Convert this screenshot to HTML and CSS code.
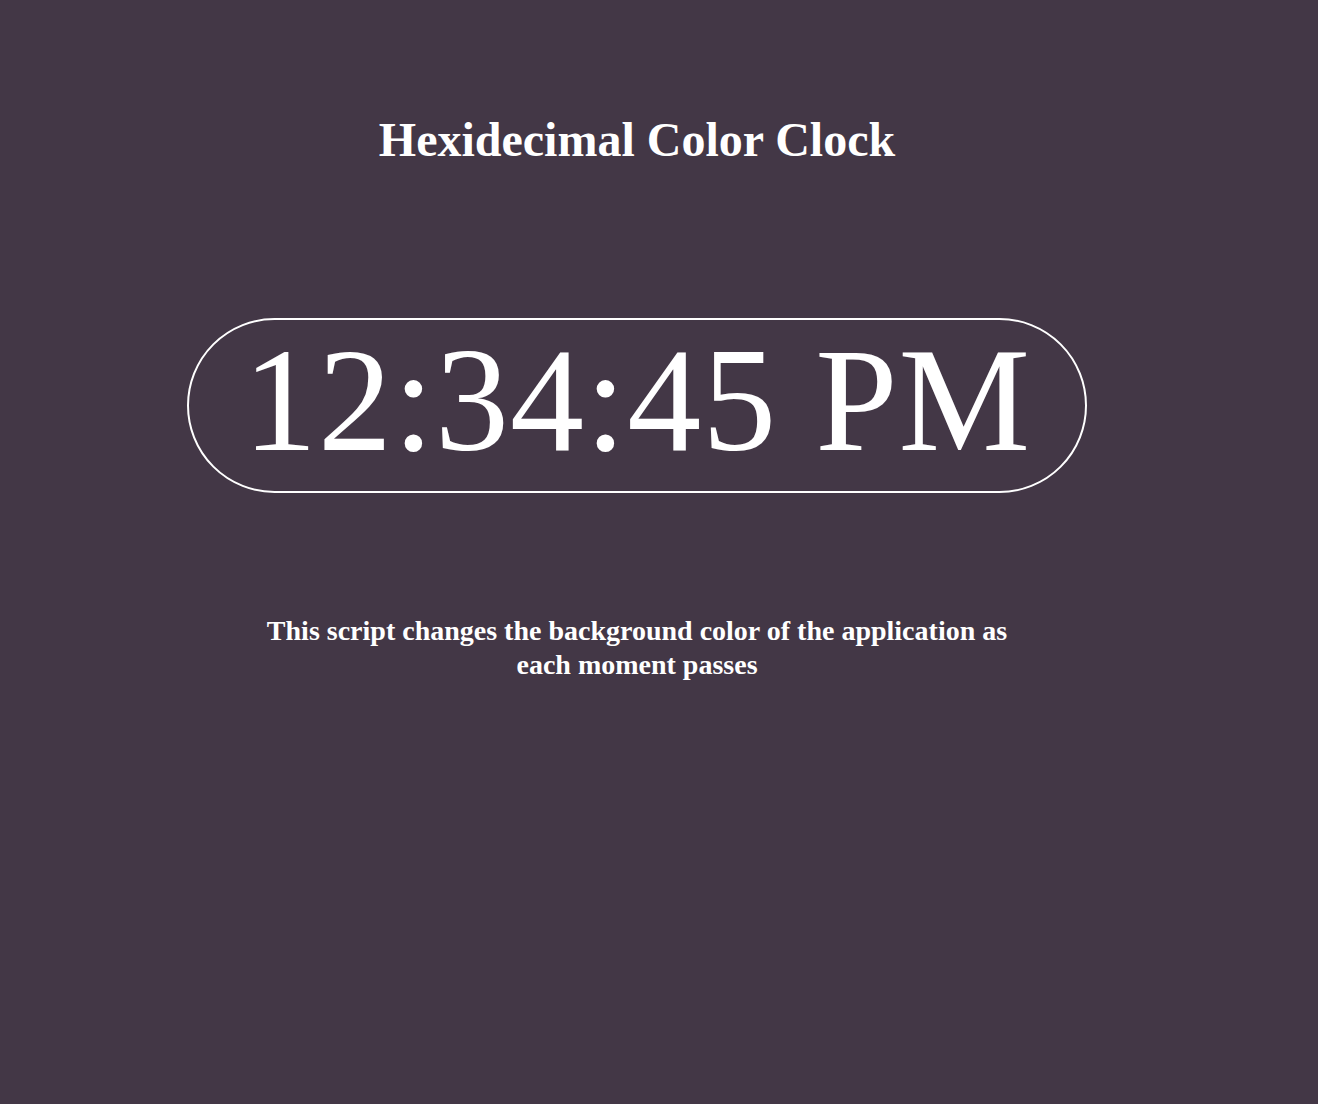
FILE: index.html
```html
<!DOCTYPE html>
<html>
<head>
<meta charset="utf-8">
<link rel="stylesheet" href="styles.css">
</head>
<body>
<div class="app">
  <h1 class="title">Hexidecimal Color Clock</h1>
  <div class="clock-wrap">
    <div class="clock">12:34:45 PM</div>
  </div>
  <p class="desc">This script changes the background color of the application as each moment passes</p>
</div>
</body>
</html>
```
FILE: styles.css
```css
html, body {
  margin: 0;
  padding: 0;
  background: #433746;
  height: 100%;
}
.app {
  width: 1274px;
  min-height: 1104px;
  display: flex;
  flex-direction: column;
  align-items: center;
  font-family: "Liberation Serif", "Times New Roman", serif;
  color: #ffffff;
  text-align: center;
}
.title {
  margin: 110px 0 0;
  font-size: 48px;
  font-weight: bold;
  line-height: 60px;
}
.clock-wrap {
  margin-top: 148px;
}
.clock {
  box-sizing: border-box;
  width: 900px;
  height: 175px;
  border: 2px solid #ffffff;
  border-radius: 88px;
  font-size: 148px;
  letter-spacing: 1px;
  line-height: 160px;
}
.desc {
  margin: 121px 0 0;
  width: 760px;
  font-size: 28px;
  font-weight: bold;
  line-height: 34px;
}
```
